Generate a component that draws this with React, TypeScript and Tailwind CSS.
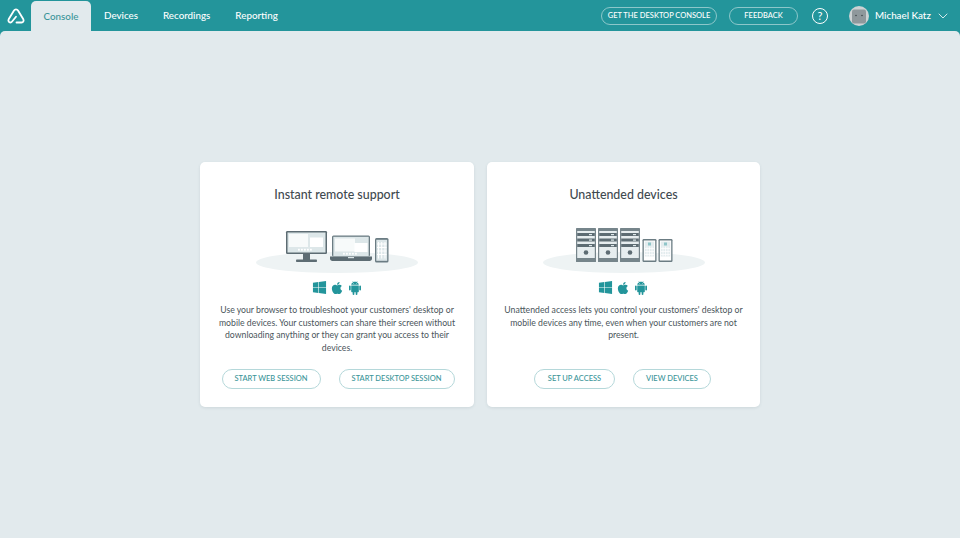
import type { ReactNode } from "react";
import { FaApple, FaWindows } from "react-icons/fa";
import { AiFillAndroid } from "react-icons/ai";
import { ChevronDown } from "lucide-react";

function Logo() {
  return (
    <svg className="block" width="18" height="16" viewBox="0 0 18 16" fill="none">
      <path
        d="M9 8.800L5.300 13.300C4.700 14.100 4 14.500 3.500 14.500C1.700 14.500 0.800 12.700 1.800 11L7 2.500C7.900 1 10.100 1 11 2.500L16.200 11C17.200 12.700 16.300 14.500 14.500 14.500H9.500"
        stroke="white"
        strokeWidth="1.800"
        strokeLinecap="round"
        strokeLinejoin="round"
      />
    </svg>
  );
}

function Avatar() {
  return (
    <svg className="block" width="20" height="20" viewBox="0 0 20 20">
      <circle cx="10" cy="10" r="10" fill="#cdd2d4" />
      <rect x="3" y="3.500" width="14" height="14" rx="2" fill="#8f989c" />
      <circle cx="7" cy="9.500" r="0.800" fill="#3f474c" />
      <circle cx="13" cy="9.500" r="0.800" fill="#3f474c" />
    </svg>
  );
}

function TaskDots({ x, y }: { x: number; y: number }) {
  return (
    <g fill="#fff">
      {[0, 3, 6, 9, 12].map((d) => (
        <rect key={d} x={x + d} y={y} width="1.800" height="1.800" />
      ))}
    </g>
  );
}

function DevicesArt() {
  return (
    <svg className="block" width="162" height="47" viewBox="0 0 162 47">
      <ellipse cx="81" cy="35.500" rx="81" ry="10.500" fill="#eef3f4" />
      {/* monitor */}
      <rect x="30" y="4" width="41" height="23" rx="1.200" fill="#5d6c73" />
      <rect x="31.500" y="5.500" width="38" height="20" fill="#dde7e9" />
      <rect x="33" y="7" width="19" height="13" fill="#f7fafa" />
      <rect x="54" y="10.500" width="13" height="9.500" fill="#fff" />
      <TaskDots x={42} y={21.800} />
      <rect x="47" y="27" width="7" height="6" fill="#5d6c73" />
      <rect x="40" y="32.500" width="21" height="2.500" rx="0.800" fill="#5d6c73" />
      {/* laptop */}
      <rect x="76" y="8.500" width="38" height="21" rx="1.500" fill="#6b7c83" />
      <rect x="77.300" y="9.800" width="35.400" height="19.700" fill="#dde7e9" />
      <rect x="79" y="11.500" width="20" height="13" fill="#f7fafa" />
      <rect x="98.500" y="16" width="13" height="9" fill="#fff" />
      <TaskDots x={87} y={25.800} />
      <path d="M74 29.500H116V31.500C116 33 115 34 113.500 34H76.500C75 34 74 33 74 31.500Z" fill="#5d6c73" />
      <rect x="92" y="30" width="6" height="1.200" fill="#dde7e9" />
      {/* phone */}
      <rect x="119" y="11" width="13.500" height="24.500" rx="1.500" fill="#6b7c83" />
      <rect x="120.300" y="12.800" width="10.900" height="21" fill="#dde7e9" />
      <path d="M122.500 15V31.500M125.700 15V31.500M129 15V31.500M121 17H130.500M121 20.500H130.500M121 24H130.500M121 27.500H130.500" stroke="#fff" strokeWidth="1" />
    </svg>
  );
}

function ServerUnit({ x }: { x: number }) {
  return (
    <g>
      <rect x={x} y={1} width={20} height={34} rx="0.600" fill="#76858b" />
      <rect x={x + 1.200} y={4} width={17.600} height={27} fill="#e6edef" />
      <rect x={x + 1.200} y={6} width={17.600} height={3} fill="#5d6c73" />
      <rect x={x + 1.200} y={11.500} width={17.600} height={3} fill="#5d6c73" />
      <rect x={x + 1.200} y={17} width={17.600} height={3} fill="#5d6c73" />
      <rect x={x + 13} y={7} width={3} height={1.200} fill="#dde7e9" />
      <rect x={x + 13} y={12.500} width={3} height={1.200} fill="#dde7e9" />
      <rect x={x + 13} y={18} width={3} height={1.200} fill="#dde7e9" />
      <circle cx={x + 10} cy={25.500} r="2.300" fill="#5d6c73" />
    </g>
  );
}

function TallPhone({ x }: { x: number }) {
  return (
    <g>
      <rect x={x} y={12} width={14} height={23} rx="1.200" fill="#6b7c83" />
      <rect x={x + 1.300} y={13.500} width={11.400} height={20} fill="#fff" />
      <rect x={x + 2.300} y={14.500} width={9.400} height={15} fill="#e3ecee" />
      <rect x={x + 5.500} y={15.500} width={3} height={3} fill="#8fc5c9" />
      <path d={`M${x + 4.500} 19.500V29.500M${x + 7} 19.500V29.500M${x + 9.500} 19.500V29.500M${x + 2.300} 21.500H${x + 11.700}M${x + 2.300} 24.500H${x + 11.700}M${x + 2.300} 27.500H${x + 11.700}`} stroke="#fff" strokeWidth="0.700" />
    </g>
  );
}

function ServersArt() {
  return (
    <svg className="block" width="162" height="47" viewBox="0 0 162 47">
      <ellipse cx="81" cy="35.500" rx="81" ry="10.500" fill="#eef3f4" />
      <ServerUnit x={33} />
      <ServerUnit x={55} />
      <ServerUnit x={77} />
      <TallPhone x={99.500} />
      <TallPhone x={115.500} />
    </svg>
  );
}

function OsIcons() {
  return (
    <div className="flex h-[15px] items-center justify-center gap-[3px] text-[#23959b]">
      <FaWindows className="size-[15px]" />
      <FaApple className="size-[14px]" />
      <AiFillAndroid className="size-4" />
    </div>
  );
}

function CardButton({ label, width }: { label: string; width: string }) {
  return (
    <button className={`h-5 rounded-full border border-[#b5d8da] bg-white text-[7.500px] font-medium text-[#3a9599] ${width}`}>
      {label}
    </button>
  );
}

function Card({
  title,
  art,
  text,
  rowClass,
  children,
}: {
  title: string;
  art: ReactNode;
  text: string;
  rowClass: string;
  children: ReactNode;
}) {
  return (
    <div className="flex h-[245px] flex-col items-center rounded-[5px] bg-white pt-[25px] pb-[18px] shadow-[0_1px_3px_rgba(60,90,100,0.12)]">
      <h2 className="text-[12.400px] leading-4 font-medium text-[#3f4a50]">{title}</h2>
      <div className="mt-6">{art}</div>
      <div className="mt-[6px]">
        <OsIcons />
      </div>
      <p className="mt-[9px] w-[242px] text-center text-[8.700px] leading-[12.500px] text-[#4a555b]">{text}</p>
      <div className={`mt-auto flex gap-[18px] ${rowClass}`}>{children}</div>
    </div>
  );
}

export default function App() {
  const tabs = ["Devices", "Recordings", "Reporting"];
  return (
    <div className="flex h-screen flex-col bg-[#23959b] font-['Lato',sans-serif]">
      <header className="flex h-[31px] shrink-0 items-end">
        <div className="flex h-[31px] w-[31px] items-center justify-center pl-[1px]">
          <Logo />
        </div>
        <div className="flex h-[30px] w-[60px] items-center justify-center rounded-t-[5px] bg-[#e2eaed] text-[9.800px] font-medium text-[#3a9599]">
          Console
        </div>
        <nav className="flex h-[31px] items-center gap-[25px] pl-[13px] text-[9.800px] font-medium text-white">
          {tabs.map((t) => (
            <span key={t}>{t}</span>
          ))}
        </nav>
        <div className="ml-auto flex h-[31px] items-center">
          <button className="h-[18px] w-[116px] rounded-full border border-[#8cc7ca] text-[7.500px] font-medium text-white">
            GET THE DESKTOP CONSOLE
          </button>
          <button className="ml-3 h-[18px] w-[69px] rounded-full border border-[#8cc7ca] text-[7.500px] font-medium text-white">
            FEEDBACK
          </button>
          <div className="ml-[14px] flex size-4 items-center justify-center rounded-full border border-white text-[11px] leading-none text-white">
            ?
          </div>
          <div className="ml-[21px]">
            <Avatar />
          </div>
          <span className="ml-[6px] w-[56px] text-[9.800px] font-medium whitespace-nowrap text-white">Michael Katz</span>
          <ChevronDown className="mr-[9px] ml-1 text-white" size={16} strokeWidth={1.200} />
        </div>
      </header>
      <main className="flex flex-1 items-center justify-center gap-[13px] rounded-t-[5px] bg-[#e2eaed]">
        <div className="w-[274px]">
          <Card
            title="Instant remote support"
            art={<DevicesArt />}
            rowClass="ml-[2px]"
            text="Use your browser to troubleshoot your customers' desktop or mobile devices. Your customers can share their screen without downloading anything or they can grant you access to their devices."
          >
            <CardButton label="START WEB SESSION" width="w-[99px]" />
            <CardButton label="START DESKTOP SESSION" width="w-[116px]" />
          </Card>
        </div>
        <div className="w-[273px]">
          <Card
            title="Unattended devices"
            art={<ServersArt />}
            rowClass="mr-[2px]"
            text="Unattended access lets you control your customers' desktop or mobile devices any time, even when your customers are not present."
          >
            <CardButton label="SET UP ACCESS" width="w-[81px]" />
            <CardButton label="VIEW DEVICES" width="w-[78px]" />
          </Card>
        </div>
      </main>
    </div>
  );
}
